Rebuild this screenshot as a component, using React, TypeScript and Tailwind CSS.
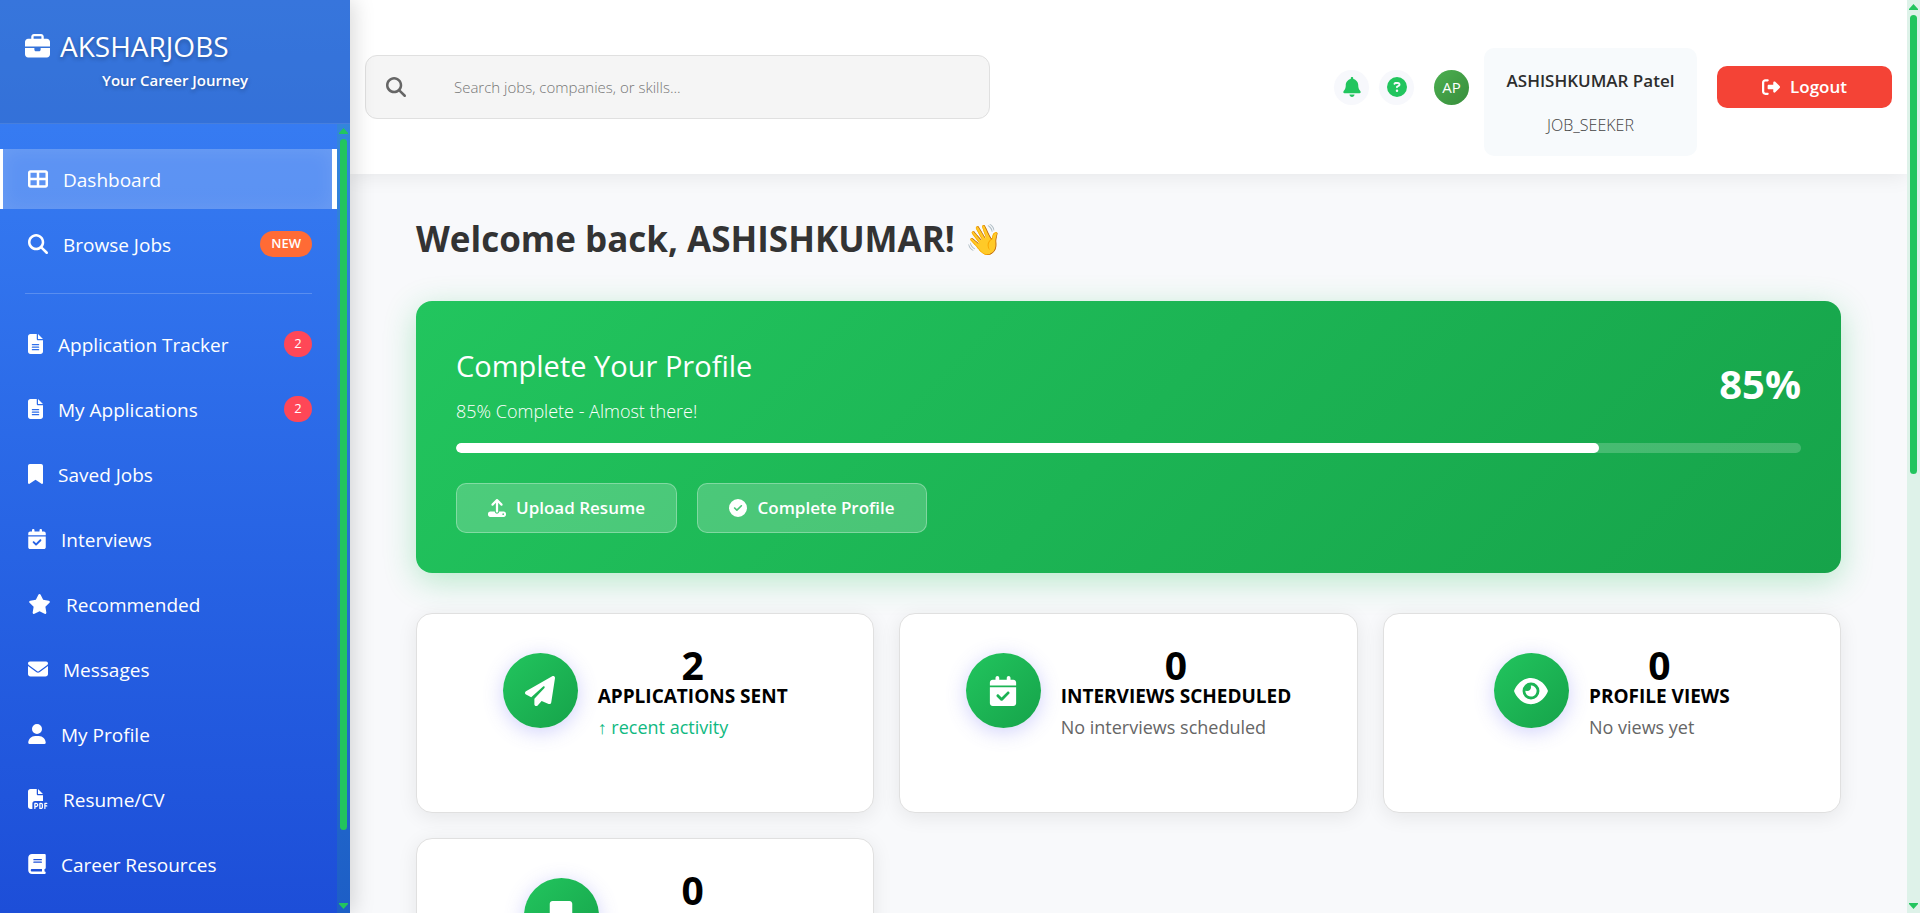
import type { ReactNode } from "react";
import type { IconType } from "react-icons";
import {
  FaBell,
  FaBook,
  FaBookmark,
  FaBriefcase,
  FaCalendarCheck,
  FaCircleCheck,
  FaCircleQuestion,
  FaEnvelope,
  FaEye,
  FaFileLines,
  FaFilePdf,
  FaMagnifyingGlass,
  FaPaperPlane,
  FaRightFromBracket,
  FaStar,
  FaTableCellsLarge,
  FaUpload,
  FaUser,
} from "react-icons/fa6";

type NavEntry = { label: string; icon: IconType; width: string; badge?: string; active?: boolean };

const narrow = "w-[15px]";
const medium = "w-[18px]";
const square = "w-5";
const wide = "w-[23px]";

const discover: NavEntry[] = [
  { label: "Dashboard", icon: FaTableCellsLarge, width: square, active: true },
  { label: "Browse Jobs", icon: FaMagnifyingGlass, width: square, badge: "NEW" },
];

const personal: NavEntry[] = [
  { label: "Application Tracker", icon: FaFileLines, width: narrow, badge: "2" },
  { label: "My Applications", icon: FaFileLines, width: narrow, badge: "2" },
  { label: "Saved Jobs", icon: FaBookmark, width: narrow },
  { label: "Interviews", icon: FaCalendarCheck, width: medium },
  { label: "Recommended", icon: FaStar, width: wide },
  { label: "Messages", icon: FaEnvelope, width: square },
  { label: "My Profile", icon: FaUser, width: medium },
  { label: "Resume/CV", icon: FaFilePdf, width: square },
  { label: "Career Resources", icon: FaBook, width: medium },
];

function NavItem({ label, icon: Icon, width, badge, active }: NavEntry) {
  return (
    <li>
      <a
        href="#"
        aria-current={active ? "page" : undefined}
        className={
          active
            ? "flex h-15 items-center border-l-3 border-r-5 border-white bg-white/20 pt-[3px] pl-[25px] pr-5 shadow-[inset_0_0_20px_rgba(255,255,255,0.1)]"
            : "flex h-15 items-center pt-[3px] pl-7 pr-[25px]"
        }
      >
        <Icon className={`mb-1 h-5 shrink-0 ${width}`} />
        <span className="ml-[15px] flex-1 text-[19px]">{label}</span>
        {badge && (
          <span
            className={
              badge === "NEW"
                ? "mb-1 flex h-[26px] items-center rounded-full bg-[#ff6b35] px-[11px] text-[13px] font-semibold"
                : "mb-1 flex h-[26px] w-7 items-center justify-center rounded-full bg-[#ff4757] text-[13px]"
            }
          >
            {badge}
          </span>
        )}
      </a>
    </li>
  );
}

function ScrollTrack({ track, children }: { track: string; children: ReactNode }) {
  return (
    <div aria-hidden="true" className={`flex w-[13px] shrink-0 flex-col items-center py-1 ${track}`}>
      <svg viewBox="0 0 9 6" className="h-[6px] w-[9px] shrink-0 fill-[#22c55e]">
        <path d="M4.5 0 9 5v1H0V5z" />
      </svg>
      <div className="my-[5px] flex w-[7px] flex-1 flex-col">{children}</div>
      <svg viewBox="0 0 9 6" className="h-[6px] w-[9px] shrink-0 fill-[#22c55e]">
        <path d="M4.5 6 9 1V0H0v1z" />
      </svg>
    </div>
  );
}

function Sidebar() {
  return (
    <aside className="relative z-20 flex w-[350px] shrink-0 flex-col bg-linear-to-b from-[#3b82f6] to-[#1d4ed8] text-white shadow-[4px_0_20px_rgba(0,0,0,0.15)]">
      <div className="h-[124px] shrink-0 border-b border-white/10 bg-[rgba(45,90,160,0.3)] px-[25px] pt-[27px] [text-shadow:0_2px_4px_rgba(0,0,0,0.3)]">
        <div className="flex items-center gap-[10px]">
          <FaBriefcase className="size-[25px]" />
          <span className="text-[28px] leading-[38px]">AKSHARJOBS</span>
        </div>
        <p className="ml-[77px] text-[15px] leading-[30px] font-semibold">Your Career Journey</p>
      </div>
      <div className="flex min-h-0 flex-1">
        <nav aria-label="Main" className="flex-1 overflow-hidden pt-[25px]">
          <ul className="flex flex-col gap-[5px]">
            {discover.map((e) => (
              <NavItem key={e.label} {...e} />
            ))}
          </ul>
          <hr className="mx-[25px] mt-[19px] mb-5 border-white/20" />
          <ul className="flex flex-col gap-[5px]">
            {personal.map((e) => (
              <NavItem key={e.label} {...e} />
            ))}
          </ul>
        </nav>
        <ScrollTrack track="bg-[rgba(34,197,94,0.14)]">
          <div className="h-[91%] rounded-full bg-[#22c55e]" />
        </ScrollTrack>
      </div>
    </aside>
  );
}

function Header() {
  return (
    <header className="relative z-10 flex h-[174px] shrink-0 items-center justify-between bg-white px-[15px] shadow-[0_2px_20px_rgba(0,0,0,0.08)]">
      <label className="flex h-16 w-[625px] items-center rounded-xl border border-[#e0e0e0] bg-[#f5f5f5] pl-5">
        <FaMagnifyingGlass className="size-5 shrink-0 text-[#666]" />
        <span className="sr-only">Search</span>
        <input
          type="search"
          placeholder="Search jobs, companies, or skills..."
          className="ml-12 h-full flex-1 bg-transparent text-[15px] font-light outline-none placeholder:text-[#757575]"
        />
      </label>
      <div className="flex items-center">
        <button aria-label="Notifications" className="flex size-[35px] items-center justify-center rounded-full bg-[#f7f8fc] text-[#22c55e]">
          <FaBell className="size-5" />
        </button>
        <button aria-label="Help" className="ml-[10px] flex size-[35px] items-center justify-center rounded-full bg-[#f7f8fc] text-[#22c55e]">
          <FaCircleQuestion className="size-5" />
        </button>
        <span className="ml-5 flex size-[35px] items-center justify-center rounded-full bg-linear-135 from-[#4caf50] to-[#388e3c] text-[15px] text-white">
          AP
        </span>
        <div className="mt-[30px] ml-[15px] flex h-[108px] min-w-[213px] flex-col items-center justify-center gap-[22px] rounded-[10px] bg-[#f7fafc] px-5">
          <span className="text-[17px] leading-6 font-semibold text-[#2d2d2d]">ASHISHKUMAR Patel</span>
          <span className="text-[16px] leading-5 font-light text-[#444]">JOB_SEEKER</span>
        </div>
        <button className="ml-5 flex h-[42px] w-[175px] items-center justify-center gap-[10px] rounded-[10px] bg-[#f44336] text-[17px] font-semibold text-white">
          <FaRightFromBracket className="size-[18px]" />
          Logout
        </button>
      </div>
    </header>
  );
}

function ProfileCard() {
  const percent = 85;
  return (
    <section className="mt-[35px] rounded-2xl bg-linear-135 from-[#22c55e] to-[#16a34a] p-10 text-white shadow-[0_8px_32px_rgba(34,197,94,0.3)]">
      <div className="flex items-center justify-between">
        <div>
          <h2 className="text-[29px] leading-[50px]">Complete Your Profile</h2>
          <p className="mt-1 text-[18px] leading-8 font-light">{percent}% Complete - Almost there!</p>
        </div>
        <span className="text-[40px] leading-[60px] font-bold">{percent}%</span>
      </div>
      <div className="mt-4 h-[10px] overflow-hidden rounded-full bg-white/20">
        <div className="h-full rounded-full bg-white" style={{ width: `${percent}%` }} />
      </div>
      <div className="mt-[30px] flex gap-5">
        <button className="flex h-[50px] w-[221px] items-center justify-center gap-[10px] rounded-[10px] border border-white/30 bg-white/20 text-[17px] font-semibold">
          <FaUpload className="size-[18px]" />
          Upload Resume
        </button>
        <button className="flex h-[50px] w-[230px] items-center justify-center gap-[10px] rounded-[10px] border border-white/30 bg-white/20 text-[17px] font-semibold">
          <FaCircleCheck className="size-[18px]" />
          Complete Profile
        </button>
      </div>
    </section>
  );
}

type Stat = { value: string; label: string; note: string; icon: IconType; positive?: boolean };

const stats: Stat[] = [
  { value: "2", label: "APPLICATIONS SENT", note: "↑ recent activity", icon: FaPaperPlane, positive: true },
  { value: "0", label: "INTERVIEWS SCHEDULED", note: "No interviews scheduled", icon: FaCalendarCheck },
  { value: "0", label: "PROFILE VIEWS", note: "No views yet", icon: FaEye },
  { value: "0", label: "SAVED JOBS", note: "No saved jobs yet", icon: FaBookmark },
];

function StatCard({ value, label, note, icon: Icon, positive }: Stat) {
  return (
    <article className="flex h-50 items-start justify-center gap-5 rounded-2xl border border-[#e0e0e0] bg-white pt-[39px] shadow-[0_4px_20px_rgba(0,0,0,0.08)]">
      <div className="flex size-[75px] shrink-0 items-center justify-center rounded-full bg-linear-135 from-[#22c55e] to-[#16a34a] text-white shadow-[0_4px_20px_rgba(99,102,241,0.3)]">
        <Icon className="h-[30px] w-[34px]" />
      </div>
      <div>
        <p className="mb-1 text-center text-[39px] leading-6 font-bold text-black">{value}</p>
        <p className="text-[19px] leading-[30px] font-bold text-black">{label}</p>
        <p className={positive ? "text-[18px] leading-8 text-[#10b981]" : "text-[18px] leading-8 text-[#666]"}>
          {note}
        </p>
      </div>
    </article>
  );
}

export default function App() {
  return (
    <div className="flex h-screen overflow-hidden bg-[#f8f9fb] font-['Open_Sans','Noto_Sans',sans-serif]">
      <Sidebar />
      <div className="flex min-w-0 flex-1 flex-col overflow-hidden">
        <Header />
        <main className="flex-1 px-[66px] pt-[38px]">
          <h1 className="flex h-[54px] items-center gap-[10px] text-[35px] leading-[52px] font-bold text-[#333]">
            Welcome back, ASHISHKUMAR! <span className="text-[30px]">👋</span>
          </h1>
          <ProfileCard />
          <div className="mt-10 grid grid-cols-3 gap-[25px]">
            {stats.map((s) => (
              <StatCard key={s.label} {...s} />
            ))}
          </div>
        </main>
      </div>
      <ScrollTrack track="bg-[#def2e9]">
        <div className="h-[52%] rounded-full bg-[#22c55e]" />
      </ScrollTrack>
    </div>
  );
}
